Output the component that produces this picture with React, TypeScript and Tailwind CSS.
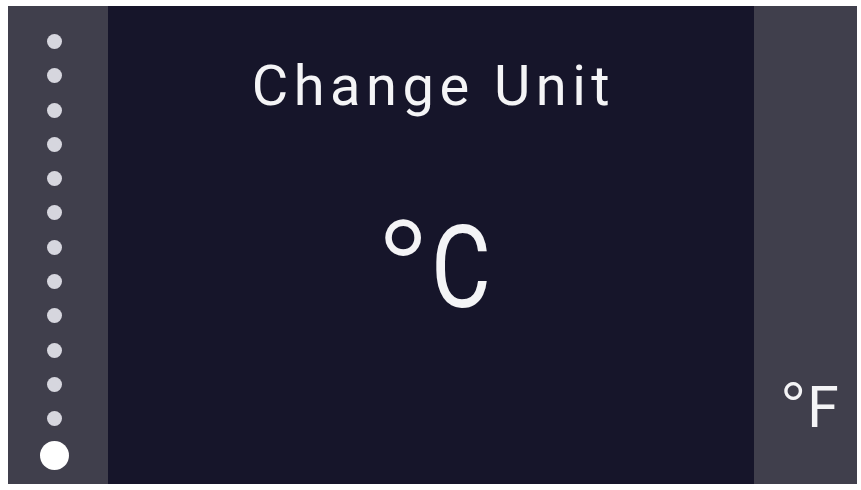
const dots = Array.from({ length: 12 });

export default function App() {
  return (
    <div className="w-[861px] h-[490px] bg-white pl-2 pr-1 py-[6px] flex font-['Roboto',sans-serif] text-[#f4f4f6]">
      {/* page indicator */}
      <div className="w-[100px] h-full bg-[#403f4c] flex flex-col items-center pr-2 pt-[28px]">
        {dots.map((_, i) => (
          <div key={i} className="w-[15px] h-[15px] rounded-full bg-[#d6d6de] mb-[19.3px] shrink-0" />
        ))}
        <div className="w-[29px] h-[29px] rounded-full bg-white -mt-[5px] shrink-0" />
      </div>

      {/* current value */}
      <div className="flex-1 h-full bg-[#16152a] flex flex-col items-center">
        <h1 className="mt-[52px] text-[56px] leading-none tracking-[5.5px] font-normal pl-[5px]">Change Unit</h1>
        <div className="mt-[96px] leading-none font-normal flex items-start pl-[6px]">
          <span className="text-[150px] leading-none font-light -mt-[8px]">°</span>
          <span className="text-[115px] leading-none inline-block scale-x-[0.8] origin-left w-[62px]">C</span>
        </div>
      </div>

      {/* next option */}
      <div className="w-[103px] h-full bg-[#403f4c] flex items-start pt-[373px] pl-[25px]">
        <span className="text-[75px] leading-none font-light -mt-[6px]">°</span>
        <span className="text-[57px] leading-none font-normal">F</span>
      </div>
    </div>
  );
}
